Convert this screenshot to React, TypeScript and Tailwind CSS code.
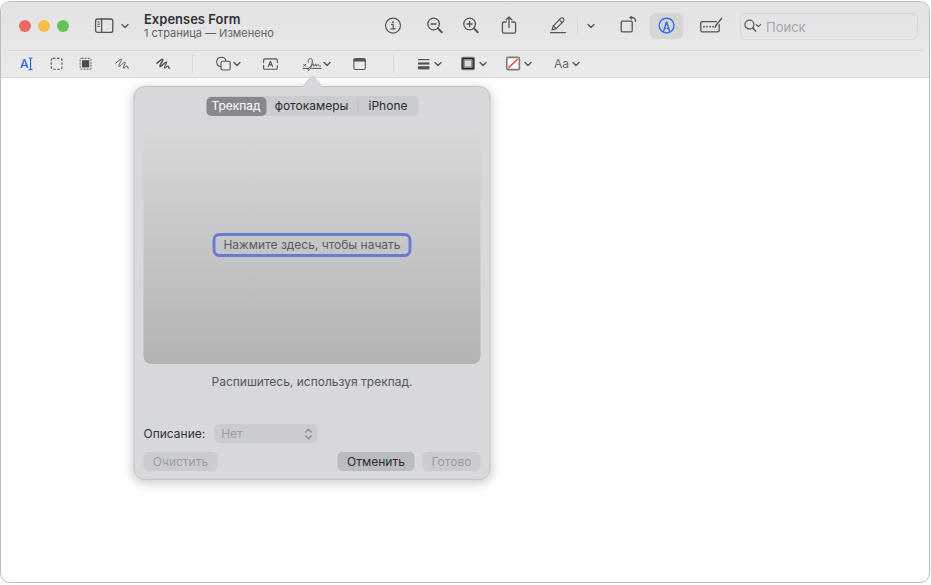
import type { ReactNode } from "react";

const ICON = "h-5 shrink-0 fill-none stroke-[#555557] [stroke-linecap:round] [stroke-linejoin:round]";

function Chevron({ className = "" }: { className?: string }) {
  return (
    <svg
      viewBox="0 0 10 10"
      aria-hidden="true"
      className={`size-[10px] shrink-0 fill-none stroke-[#555557] stroke-[1.4] [stroke-linecap:round] [stroke-linejoin:round] ${className}`}
    >
      <path d="M2 3.6 L5 6.5 L8 3.6" />
    </svg>
  );
}

function ToolButton({
  label,
  className = "",
  children,
}: {
  label: string;
  className?: string;
  children: ReactNode;
}) {
  return (
    <button type="button" aria-label={label} className={`flex shrink-0 items-center ${className}`}>
      {children}
    </button>
  );
}

function Divider({ className = "" }: { className?: string }) {
  return <span className={`h-[18px] w-px shrink-0 bg-[#d8d8da] ${className}`} />;
}

function TitleBar() {
  return (
    <div className="flex h-12 items-center pr-[11px] pl-[18px]">
      <div className="flex shrink-0 gap-[7px]">
        <button type="button" aria-label="Закрыть" className="size-3 rounded-full bg-[#ed6a5e]" />
        <button type="button" aria-label="Свернуть" className="size-3 rounded-full bg-[#f5bf4f]" />
        <button type="button" aria-label="Развернуть" className="size-3 rounded-full bg-[#61c554]" />
      </div>

      <ToolButton label="Боковое меню" className="ml-[25px] gap-[6px]">
        <svg viewBox="0 0 20 20" className={`w-5 stroke-[1.3] ${ICON}`} aria-hidden="true">
          <rect x="1.6" y="3" width="17.2" height="13.4" rx="2" />
          <path d="M7.6 3 V16.4" />
          <path d="M3.8 6 H5.4 M3.8 8.2 H5.4 M3.8 10.4 H5.4" strokeWidth="1" />
        </svg>
        <Chevron />
      </ToolButton>

      <div className="ml-[14px] min-w-0 flex-1">
        <h1 className="truncate text-[13px] leading-[14px] font-semibold text-[#333335]">Expenses Form</h1>
        <p className="truncate text-[11px] leading-[14px] text-[#636365]">1 страница — Изменено</p>
      </div>

      <ToolButton label="Информация">
        <svg viewBox="0 0 18 20" className={`w-[18px] stroke-[1.2] ${ICON}`} aria-hidden="true">
          <circle cx="9" cy="9.6" r="7.5" />
          <path d="M7.4 8.4 H9.2 V12.8 M7 12.9 H11.2" />
          <circle cx="9" cy="6" r="0.9" className="fill-[#555557] stroke-none" />
        </svg>
      </ToolButton>
      <ToolButton label="Уменьшить" className="ml-6">
        <svg viewBox="0 0 18 20" className={`w-[18px] stroke-[1.3] ${ICON}`} aria-hidden="true">
          <circle cx="7.6" cy="8" r="5.8" />
          <path d="M5 8 H10.2" />
          <path d="M12 12.4 L15.8 16.2" strokeWidth="2" />
        </svg>
      </ToolButton>
      <ToolButton label="Увеличить" className="ml-[18px]">
        <svg viewBox="0 0 18 20" className={`w-[18px] stroke-[1.3] ${ICON}`} aria-hidden="true">
          <circle cx="7.6" cy="8" r="5.8" />
          <path d="M5 8 H10.2 M7.6 5.4 V10.6" />
          <path d="M12 12.4 L15.8 16.2" strokeWidth="2" />
        </svg>
      </ToolButton>
      <ToolButton label="Поделиться" className="ml-5">
        <svg viewBox="0 0 18 20" className={`w-[18px] stroke-[1.3] ${ICON}`} aria-hidden="true">
          <path d="M6.2 6 H4 Q2.4 6 2.4 7.6 V15.6 Q2.4 17.2 4 17.2 H14 Q15.6 17.2 15.6 15.6 V7.6 Q15.6 6 14 6 H11.8" />
          <path d="M9 11.4 V1.2 M6.2 3.8 L9 1 L11.8 3.8" />
        </svg>
      </ToolButton>
      <ToolButton label="Выделить" className="ml-[31px]">
        <svg viewBox="0 0 18 20" className={`w-[18px] stroke-[1.2] ${ICON}`} aria-hidden="true">
          <path d="M1.5 16.6 H16.5" />
          <path d="M3 14 L4.4 9.8 L11.8 2.2 Q12.9 1.3 14 2.3 L14.6 2.9 Q15.6 4 14.6 5.1 L7.2 12.6 Z" />
          <path d="M4.4 9.8 L7.2 12.6 M10.4 3.8 L13.2 6.6" />
        </svg>
      </ToolButton>
      <Divider className="ml-[10px]" />
      <ToolButton label="Цвет выделения" className="ml-2">
        <Chevron />
      </ToolButton>
      <ToolButton label="Повернуть" className="ml-[22px]">
        <svg viewBox="0 0 20 20" className={`w-5 stroke-[1.3] ${ICON}`} aria-hidden="true">
          <rect x="3.2" y="5.2" width="11" height="10.6" rx="1.2" />
          <path d="M13 1.6 H14.4 Q17.4 1.8 17.6 5.4" />
          <path d="M13.6 0 L11.4 1.6 L13.6 3.3 Z" className="fill-[#555557]" strokeWidth="0.6" />
        </svg>
      </ToolButton>
      <button
        type="button"
        aria-label="Разметка"
        aria-pressed="true"
        className="ml-3 flex h-[26px] w-[33px] shrink-0 items-center justify-center rounded-md bg-[#d6d6d8]"
      >
        <svg
          viewBox="0 0 18 18"
          className="size-[18px] fill-none stroke-[#3170e8] stroke-[1.4] [stroke-linejoin:round]"
          aria-hidden="true"
        >
          <circle cx="8.6" cy="8.6" r="7.4" />
          <path d="M5.4 15 L8.1 6 Q8.6 4.8 9.1 6 L11.8 15" />
          <path d="M6.6 12 Q8.6 10.4 10.6 12" strokeWidth="1" />
          <path d="M8.1 4.4 H9.1 L9.8 8 H7.4 Z" className="fill-[#3170e8] stroke-none" />
        </svg>
      </button>
      <ToolButton label="Заполнение форм" className="ml-4">
        <svg viewBox="0 0 24 20" className={`w-6 stroke-[1.3] ${ICON}`} aria-hidden="true">
          <path d="M17.4 5.6 H3.2 Q1.8 5.6 1.8 7 V14.4 Q1.8 15.8 3.2 15.8 H18.6 Q20.2 15.8 20.2 14.4 V8.6" />
          <path d="M4.9 10.7 H5 M8 10.7 H8.1 M11.1 10.7 H11.2 M14 10.7 H14.1" strokeWidth="1.7" />
          <path d="M16.2 11.2 L17.2 9 L22.6 2.4" strokeWidth="1.5" />
        </svg>
      </ToolButton>

      <label className="ml-[17px] flex h-[27px] w-[178px] shrink items-center rounded-md border border-[#d8d8da] pl-[3px]">
        <svg viewBox="0 0 20 20" className={`w-5 stroke-[1.2] ${ICON}`} aria-hidden="true">
          <circle cx="5.4" cy="8.6" r="4.5" />
          <path d="M8.8 12 L11.6 15" strokeWidth="1.5" />
          <path d="M12.2 8.6 L14.4 10.6 L16.6 8.6" />
        </svg>
        <input
          type="search"
          aria-label="Поиск"
          placeholder="Поиск"
          className="ml-[2px] h-[22px] w-full min-w-0 bg-transparent pt-[2px] text-[13px] text-[#3b3b3d] outline-none placeholder:text-[#a5a5a7]"
        />
      </label>
    </div>
  );
}

function MarkupBar() {
  return (
    <div className="box-content flex h-[26px] items-center border-b border-[#dadadb] pl-[19px]">
      <ToolButton label="Выбор текста">
        <svg viewBox="0 0 14 14" className="size-[14px]" aria-hidden="true">
          <text x="0" y="11.2" fontSize="12" fontWeight="500" className="fill-[#2c60dc]">
            A
          </text>
          <path
            d="M8.6 1 H9.8 L10.6 1.6 L11.4 1 H12.6 M10.6 1.6 V12.2 M8.6 12.8 H9.8 L10.6 12.2 L11.4 12.8 H12.6"
            className="fill-none stroke-[#2c60dc]"
            strokeWidth="1.1"
          />
        </svg>
      </ToolButton>
      <ToolButton label="Прямоугольное выделение" className="ml-4">
        <svg viewBox="0 0 14 20" className={`w-[14px] stroke-[1.1] ${ICON}`} aria-hidden="true">
          <rect
            x="1.2"
            y="4.4"
            width="10.8"
            height="10.8"
            rx="1.8"
            strokeDasharray="2.4 1.6"
            className="[stroke-linecap:butt]"
          />
        </svg>
      </ToolButton>
      <ToolButton label="Мгновенное альфа" className="ml-[15px]">
        <svg viewBox="0 0 14 20" className={`w-[14px] stroke-[1.2] ${ICON}`} aria-hidden="true">
          <rect
            x="1.2"
            y="4.4"
            width="10.8"
            height="10.8"
            rx="1.4"
            strokeDasharray="2 1"
            className="stroke-[#777779] [stroke-linecap:butt]"
          />
          <rect x="3" y="6.2" width="7.2" height="7.2" className="fill-[#4a4a4c] stroke-none" />
        </svg>
      </ToolButton>
      <ToolButton label="Эскиз" className="ml-[22px]">
        <svg viewBox="0 0 16 20" className={`w-4 stroke-[1] ${ICON}`} aria-hidden="true">
          <path d="M0.8 9.2 C2.6 7.6 5.2 5 6.4 5.2 C7.8 5.8 3 11 3.8 12.4 C4.6 13.6 8.4 7.8 10 8.2 C11.4 8.8 7.4 13 8.4 14 C9.2 14.8 10.8 11.8 12 12 C13 12.4 11.4 14.6 13.6 14.2" />
        </svg>
      </ToolButton>
      <ToolButton label="Рисование" className="ml-[25px]">
        <svg viewBox="0 0 16 20" className={`w-4 stroke-[1.5] ${ICON}`} aria-hidden="true">
          <path d="M1 9.2 C2.8 7.6 5.4 5 6.6 5.2 C8 5.8 3.2 11 4 12.4 C4.8 13.6 8.6 7.8 10.2 8.2" />
          <path
            d="M10.2 8.2 C11.6 8.8 7.6 13 8.6 14 C9.4 14.8 11 11.8 12.2 12 C13.2 12.4 11.6 14.6 13.8 14.2"
            strokeWidth="1.2"
          />
        </svg>
      </ToolButton>
      <Divider className="ml-5" />
      <ToolButton label="Фигуры" className="ml-[23px]">
        <svg viewBox="0 0 17 20" className={`w-[17px] stroke-[1.1] ${ICON}`} aria-hidden="true">
          <path d="M4.8 12.6 A4.7 4.7 0 1 1 10 7" />
          <rect x="5" y="7.2" width="9.2" height="8.8" rx="1.6" />
        </svg>
        <Chevron className="-ml-px" />
      </ToolButton>
      <ToolButton label="Текст" className="ml-5">
        <svg viewBox="0 0 17 20" className={`w-[17px] stroke-[1.1] ${ICON}`} aria-hidden="true">
          <path d="M1.6 8.6 V6.2 Q1.6 4.9 2.9 4.9 H14 Q15.3 4.9 15.3 6.2 V8.6 M1.6 11.6 V14 Q1.6 15.3 2.9 15.3 H14 Q15.3 15.3 15.3 14 V11.6" />
          <path d="M6.2 12.6 L8.4 7.2 L10.7 12.6 M7 10.9 H9.9" />
        </svg>
      </ToolButton>
      <div className="relative ml-[23px] shrink-0">
        <ToolButton label="Подпись">
          <svg viewBox="0 0 20 20" className={`w-5 stroke-[1] ${ICON}`} aria-hidden="true">
            <path d="M1 14.4 H7 M9.6 14.4 H19" />
            <path d="M1.6 10.2 L3.8 12.4 M3.8 10.2 L1.6 12.4" strokeWidth="0.9" />
            <path d="M6.4 8.2 C5 6.4 7.4 4.2 9.2 4.6 C11.2 5.4 10.2 9.6 9 13 C8 16 5.8 17.2 5.8 15.6 C6 13.8 9.6 11.6 11.2 9.6 C11.8 9.6 10.8 12 11.6 12.2 C12.4 12.2 13 9.8 13.8 10 C14.4 10.2 13.4 12.2 14.2 12.2 C15 12.2 15.4 10.4 16.2 10.4 C16.8 10.6 16 12.4 18.6 12.2" />
          </svg>
        </ToolButton>
        <SignaturePopover />
      </div>
      <Chevron />
      <ToolButton label="Заметка" className="ml-5">
        <svg viewBox="0 0 16 20" className={`w-4 stroke-[1.1] ${ICON}`} aria-hidden="true">
          <rect x="1.9" y="4.9" width="11.4" height="10.6" rx="1.4" />
          <path d="M1.9 7 V6.3 Q1.9 4.9 3.3 4.9 H11.9 Q13.3 4.9 13.3 6.3 V7 Z" className="fill-[#555557]" />
        </svg>
      </ToolButton>
      <Divider className="ml-[25px]" />
      <ToolButton label="Стиль контура" className="ml-[23px] gap-[2px]">
        <svg viewBox="0 0 14 20" className="h-5 w-[14px] fill-[#555557]" aria-hidden="true">
          <rect x="1" y="5" width="11.4" height="1.2" />
          <rect x="1" y="8.4" width="11.4" height="2.2" />
          <rect x="1" y="12.2" width="11.4" height="3.2" />
        </svg>
        <Chevron />
      </ToolButton>
      <ToolButton label="Цвет контура" className="ml-[17px] gap-[2px]">
        <svg viewBox="0 0 16 20" className="h-5 w-4" aria-hidden="true">
          <rect x="1" y="2.8" width="14" height="13.4" rx="2" className="fill-[#777779]" />
          <rect x="3" y="4.7" width="10" height="9.6" className="fill-[#dcdcde] stroke-[#1b1b1d]" strokeWidth="1.3" />
          <rect x="4.3" y="6" width="7.4" height="7" className="fill-none stroke-[#858587]" strokeWidth="1.2" />
        </svg>
        <Chevron />
      </ToolButton>
      <ToolButton label="Цвет заливки" className="ml-[17px] gap-[2px]">
        <svg viewBox="0 0 16 20" className="h-5 w-4" aria-hidden="true">
          <rect x="1.8" y="3.4" width="12.6" height="12.2" rx="1.4" className="fill-white stroke-[#7b7b7d]" strokeWidth="1.6" />
          <path d="M3.4 14 L12.8 5" className="stroke-[#f0493c]" strokeWidth="1.6" />
        </svg>
        <Chevron />
      </ToolButton>
      <ToolButton label="Стиль текста" className="ml-[21px] gap-[2px]">
        <span className="text-[12px] leading-4 text-[#6a6a6c]">Aa</span>
        <Chevron />
      </ToolButton>
    </div>
  );
}

function SignaturePopover() {
  return (
    <div
      role="dialog"
      aria-label="Подпись"
      className="absolute top-full left-1/2 z-10 mt-3 w-[357px] -translate-x-1/2 rounded-[11px] border border-[#c3c3c6] bg-[#d7d8dc] px-[9px] pt-[9px] pb-2 text-[12px] shadow-[0_3px_12px_rgba(0,0,0,0.22)]"
    >
      <svg
        viewBox="0 0 26 13"
        className="absolute -top-3 left-1/2 h-[13px] w-[26px] -translate-x-1/2"
        aria-hidden="true"
      >
        <path
          d="M0 12 C4 12 4.6 10.2 6.4 8 L11 2.2 Q13 0 15 2.2 L19.6 8 C21.4 10.2 22 12 26 12 V13 H0 Z"
          className="fill-[#d7d8dc]"
        />
        <path
          d="M0 12 C4 12 4.6 10.2 6.4 8 L11 2.2 Q13 0 15 2.2 L19.6 8 C21.4 10.2 22 12 26 12"
          className="fill-none stroke-[#c3c3c6]"
          strokeWidth="0.8"
        />
      </svg>

      <div role="tablist" className="mx-auto flex h-5 w-[212px] items-center rounded-[5px] bg-[#cbccd0] text-[#2b2b2d]">
        <button
          type="button"
          role="tab"
          aria-selected="true"
          className="h-[19px] w-[60px] rounded-[5px] bg-[#88888c] leading-4 text-white"
        >
          Трекпад
        </button>
        <button type="button" role="tab" aria-selected="false" className="h-[19px] flex-1 leading-4">
          фотокамеры
        </button>
        <span className="h-[11px] w-px bg-[#bdbdc1]" />
        <button type="button" role="tab" aria-selected="false" className="h-[19px] w-[60px] leading-4">
          iPhone
        </button>
      </div>

      <div className="mt-[10px] flex h-[238px] items-center justify-center rounded-lg bg-linear-to-b from-[#d7d8da] to-[#b3b3b5]">
        <button
          type="button"
          className="h-6 rounded-[7px] border-[3px] border-[#6b7bd0] px-2 leading-4 text-[#5c5c5e]"
        >
          Нажмите здесь, чтобы начать
        </button>
      </div>

      <p className="mt-[9px] text-center leading-[18px] text-[#565658]">Распишитесь, используя трекпад.</p>

      <div className="mt-[33px] flex items-center">
        <label htmlFor="signature-note" className="leading-4 text-[#333335]">
          Описание:
        </label>
        <div className="relative ml-[9px]">
          <select
            id="signature-note"
            disabled
            className="block h-[19px] w-[103px] appearance-none rounded-[5px] bg-[#cbccd0] pl-[7px] leading-4 text-[#9c9c9f] opacity-100"
          >
            <option>Нет</option>
          </select>
          <svg
            viewBox="0 0 8 12"
            className="pointer-events-none absolute top-1 right-[5px] h-3 w-2 fill-none stroke-[#8c8c90] stroke-[1.3] [stroke-linecap:round] [stroke-linejoin:round]"
            aria-hidden="true"
          >
            <path d="M1.2 4 L4 1.2 L6.8 4 M1.2 8 L4 10.8 L6.8 8" />
          </svg>
        </div>
      </div>

      <div className="mt-[9px] flex gap-2 leading-4">
        <button type="button" disabled className="mr-auto h-[19px] w-[74px] rounded-[5px] bg-[#cbccd0] text-[#9c9c9f]">
          Очистить
        </button>
        <button type="button" className="h-[19px] w-[77px] rounded-[5px] bg-[#bbbcc0] text-[#2b2b2d]">
          Отменить
        </button>
        <button type="button" disabled className="h-[19px] w-[58px] rounded-[5px] bg-[#cbccd0] text-[#9c9c9f]">
          Готово
        </button>
      </div>
    </div>
  );
}

export default function App() {
  return (
    <div className="flex min-h-screen bg-white pt-px pr-px pb-[2px] font-[Inter,'Liberation_Sans',sans-serif]">
      <div className="flex min-w-0 flex-1 flex-col rounded-[10px] border border-[#bcbcbe] bg-white">
        <header className="rounded-t-[9px] bg-linear-to-b from-[#e2e2e4] to-[#ebebec]">
          <TitleBar />
          <div className="mx-[7px] h-px bg-[#d8d8da]" />
          <MarkupBar />
        </header>
        <main className="flex-1" />
      </div>
    </div>
  );
}
